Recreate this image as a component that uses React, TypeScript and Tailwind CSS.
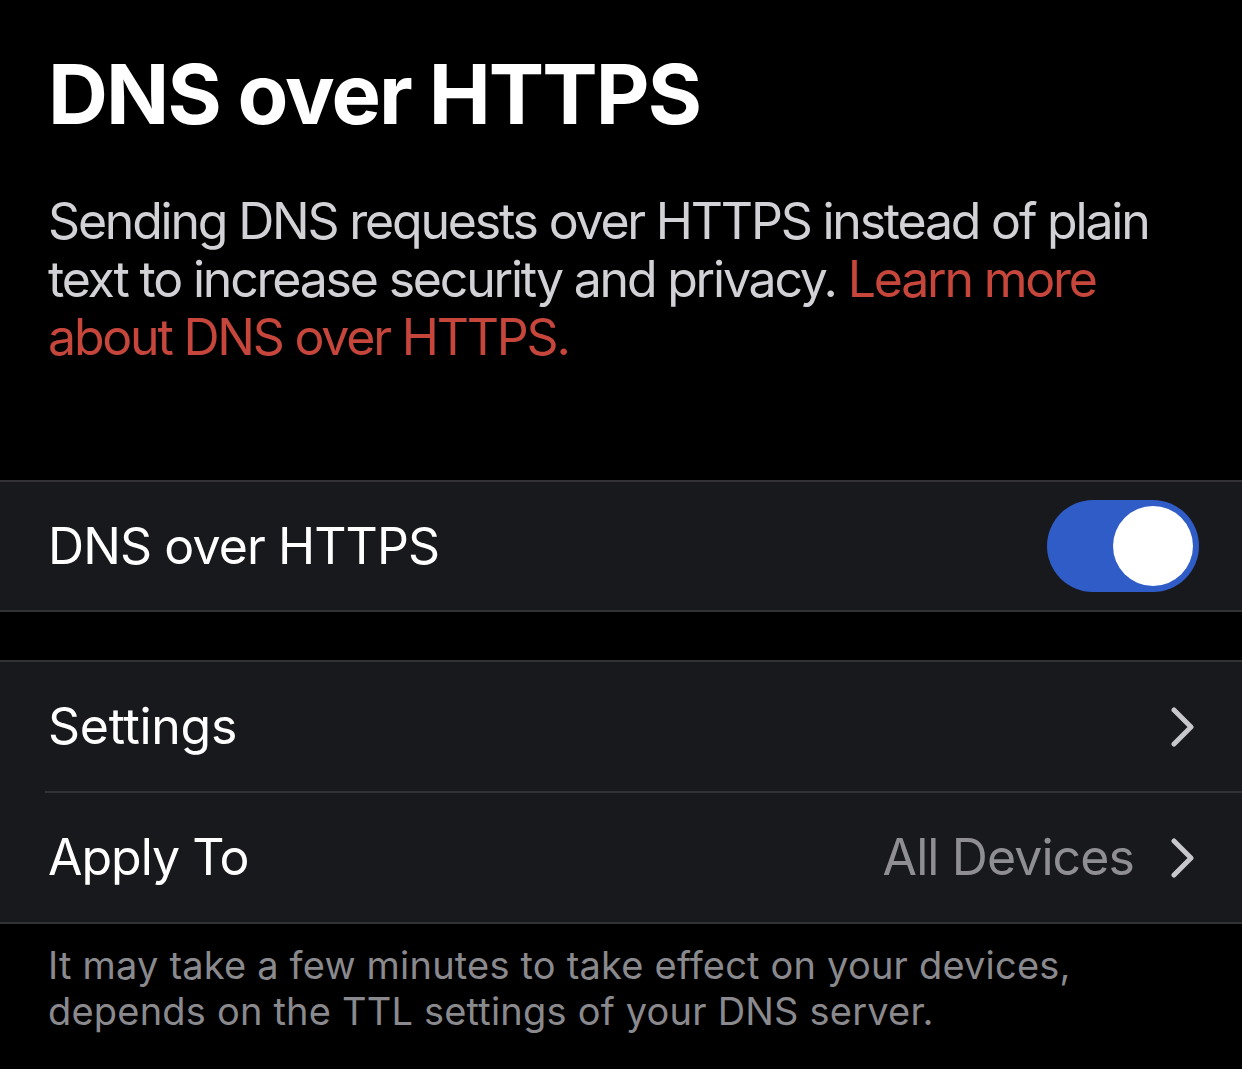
import React from "react";

const Chevron = () => (
  <svg width="26" height="40" viewBox="0 0 26 40" fill="none">
    <path
      d="M4 3 L21 20 L4 37"
      stroke="#c7c7cc"
      strokeWidth="5"
      strokeLinecap="round"
      strokeLinejoin="round"
    />
  </svg>
);

const Toggle = ({ on }: { on: boolean }) => (
  <div
    className={`w-[152px] h-[92px] rounded-full p-[6px] flex ${
      on ? "justify-end bg-[#2f5cc7]" : "justify-start bg-[#39393d]"
    }`}
  >
    <div className="w-[80px] h-[80px] rounded-full bg-white" />
  </div>
);

const App = () => {
  return (
    <div
      className="w-[1242px] h-[1069px] bg-black text-white overflow-hidden"
      style={{ fontFamily: "Inter, 'Noto Sans', sans-serif" }}
    >
      <div className="h-[480px] pl-[48px] pr-[20px] pt-[44px]">
        <h1 className="text-[83px] leading-[100px] font-bold tracking-[-1.9px]">
          DNS over HTTPS
        </h1>
        <p className="mt-[48px] text-[50px] leading-[58px] text-[#d1d1d6] tracking-[-2.2px] whitespace-nowrap">
          Sending DNS requests over HTTPS instead of plain
          <br />
          text to increase security and privacy.{" "}
          <span className="text-[#c6463b]">Learn more</span>
          <br />
          <span className="text-[#c6463b]">about DNS over HTTPS.</span>
        </p>
      </div>

      <div className="border-y-2 border-[#333336] bg-[#18191c] h-[132px] pl-[48px] pr-[43px] flex items-center justify-between">
        <span className="text-[50px] tracking-[-0.9px]">DNS over HTTPS</span>
        <Toggle on />
      </div>

      <div className="h-[48px]" />

      <div className="border-y-2 border-[#333336] bg-[#18191c]">
        <div className="h-[129px] pl-[48px] pr-[46px] flex items-center justify-between">
          <span className="text-[50px] tracking-[-0.3px]">Settings</span>
          <Chevron />
        </div>
        <div className="ml-[45px] h-[2px] bg-[#333336]" />
        <div className="h-[129px] pl-[48px] pr-[46px] flex items-center justify-between">
          <span className="text-[50px] tracking-[-1px]">Apply To</span>
          <div className="flex items-center gap-[36px]">
            <span className="text-[50px] text-[#8e8e93] tracking-[-0.9px]">All Devices</span>
            <Chevron />
          </div>
        </div>
      </div>

      <p className="pl-[48px] pt-[18px] text-[38px] leading-[46px] text-[#8a8a8e] tracking-[0.2px]">
        It may take a few minutes to take effect on your devices,
        <br />
        depends on the TTL settings of your DNS server.
      </p>
    </div>
  );
};

export default App;
